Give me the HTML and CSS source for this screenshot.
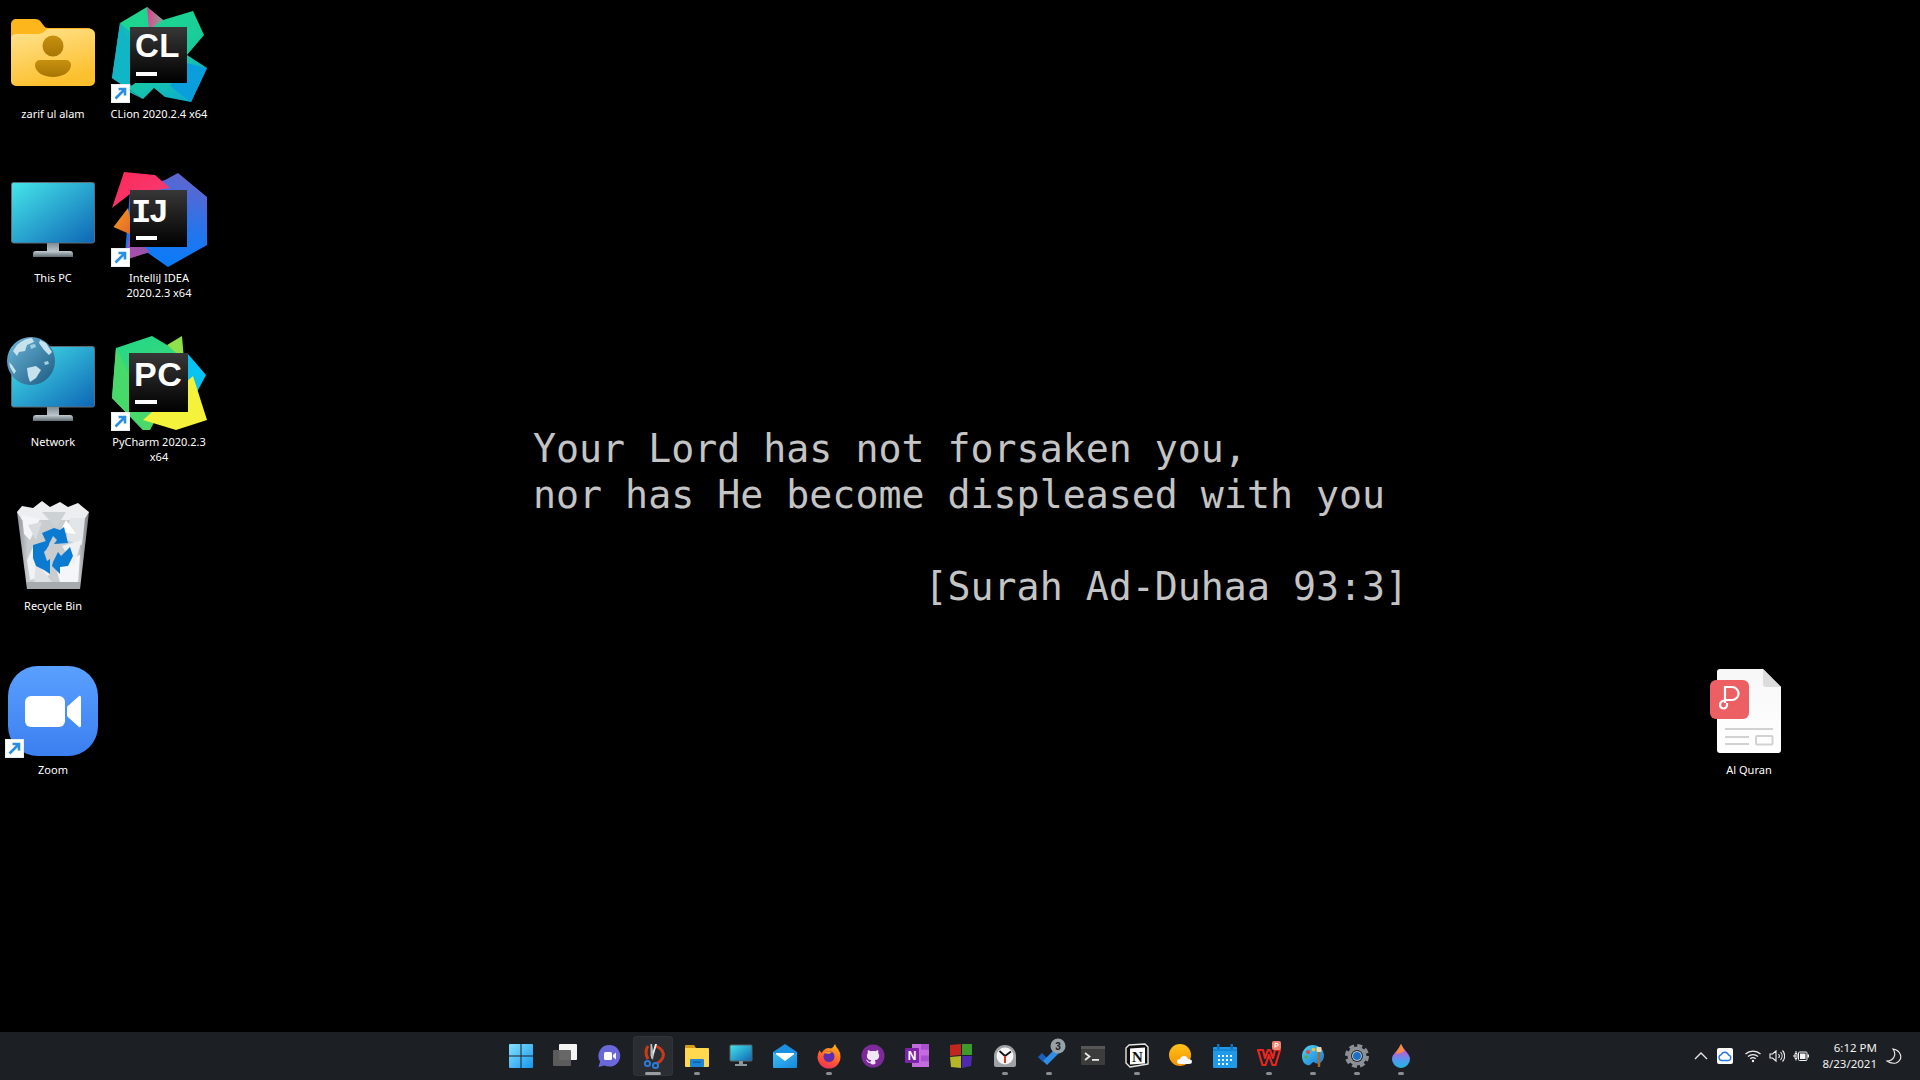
FILE: index.html
```html
<!DOCTYPE html>
<html lang="en">
<head>
<meta charset="utf-8">
<title>Desktop</title>
<link rel="stylesheet" href="styles.css">
</head>
<body>
<svg class="defs" aria-hidden="true">
  <defs>
    <linearGradient id="screen" x1="0" y1="0" x2="1" y2="1"><stop offset="0" stop-color="#45e6ea"/><stop offset="1" stop-color="#0e65b5"/></linearGradient>
    <linearGradient id="base" x1="0" y1="0" x2="0" y2="1"><stop offset="0" stop-color="#c3cdd3"/><stop offset="1" stop-color="#5f6a72"/></linearGradient>
    <linearGradient id="neck" x1="0" y1="0" x2="0" y2="1"><stop offset="0" stop-color="#7f8b93"/><stop offset="1" stop-color="#b9c3c9"/></linearGradient>
    <linearGradient id="jb" x1="0" y1="0" x2="0" y2="1"><stop offset="0" stop-color="#373737"/><stop offset="1" stop-color="#000"/></linearGradient>
    <linearGradient id="folder" x1="0" y1="0" x2="0.4" y2="1"><stop offset="0" stop-color="#ffe391"/><stop offset="1" stop-color="#fcc02e"/></linearGradient>
    <linearGradient id="person" x1="0" y1="0" x2="0" y2="1"><stop offset="0" stop-color="#c7900f"/><stop offset="1" stop-color="#a87604"/></linearGradient>
    <linearGradient id="clGreen" x1="0" y1="0" x2="1" y2="1"><stop offset="0" stop-color="#1fd98a"/><stop offset="1" stop-color="#17c9a0"/></linearGradient>
    <linearGradient id="clBlue" x1="0" y1="1" x2="1" y2="0"><stop offset="0" stop-color="#009ae5"/><stop offset="0.55" stop-color="#1cc7a8"/><stop offset="1" stop-color="#009ae5"/></linearGradient>
    <linearGradient id="clLow" x1="0" y1="0" x2="1" y2="1"><stop offset="0" stop-color="#1fd98a"/><stop offset="1" stop-color="#0aa7d8"/></linearGradient>
    <linearGradient id="clPink" x1="0" y1="0" x2="1" y2="0.3"><stop offset="0" stop-color="#ed358c"/><stop offset="1" stop-color="#8f9a94"/></linearGradient>
    <linearGradient id="ijBlue" x1="0.3" y1="1" x2="0.6" y2="0"><stop offset="0" stop-color="#087cfa"/><stop offset="0.45" stop-color="#1f76ee"/><stop offset="1" stop-color="#5f66cf"/></linearGradient>
    <linearGradient id="ijPink" x1="0" y1="0" x2="1" y2="1"><stop offset="0" stop-color="#fe2857"/><stop offset="1" stop-color="#f2407a"/></linearGradient>
    <linearGradient id="ijOrange" x1="0" y1="0" x2="1" y2="1"><stop offset="0" stop-color="#fc9b1f"/><stop offset="1" stop-color="#d8632c"/></linearGradient>
    <linearGradient id="ijPurple" x1="0" y1="1" x2="1" y2="0"><stop offset="0" stop-color="#b94bb0"/><stop offset="1" stop-color="#7c59a4"/></linearGradient>
    <linearGradient id="pcGreen" x1="0" y1="0" x2="0.3" y2="1"><stop offset="0" stop-color="#21d789"/><stop offset="1" stop-color="#4fd86a"/></linearGradient>
    <linearGradient id="zoomBg" x1="0" y1="0" x2="0" y2="1"><stop offset="0" stop-color="#5aa0ff"/><stop offset="1" stop-color="#3b7ff0"/></linearGradient>
    <linearGradient id="globe" x1="0" y1="0" x2="1" y2="1"><stop offset="0" stop-color="#6db8dc"/><stop offset="1" stop-color="#1c5a80"/></linearGradient>
    <linearGradient id="binBody" x1="0" y1="0" x2="1" y2="0"><stop offset="0" stop-color="#8d9296"/><stop offset="0.15" stop-color="#c9cdd0"/><stop offset="0.85" stop-color="#c9cdd0"/><stop offset="1" stop-color="#74787c"/></linearGradient>
    <linearGradient id="doc" x1="0" y1="0" x2="0" y2="1"><stop offset="0" stop-color="#f7f7f7"/><stop offset="1" stop-color="#fff"/></linearGradient>
    <linearGradient id="win" x1="0" y1="0" x2="1" y2="1"><stop offset="0" stop-color="#86e2ff"/><stop offset="1" stop-color="#1596ee"/></linearGradient>
    <linearGradient id="fxOuter" x1="0.7" y1="0" x2="0.3" y2="1"><stop offset="0" stop-color="#ffb415"/><stop offset="0.6" stop-color="#ff5a30"/><stop offset="1" stop-color="#f0305a"/></linearGradient>
    <linearGradient id="drop" x1="0" y1="0" x2="0" y2="1"><stop offset="0" stop-color="#f0589e"/><stop offset="0.35" stop-color="#b165d8"/><stop offset="0.7" stop-color="#4a9cf0"/><stop offset="1" stop-color="#25b6dc"/></linearGradient>
    <linearGradient id="sun" x1="0" y1="0" x2="0" y2="1"><stop offset="0" stop-color="#ffc21a"/><stop offset="1" stop-color="#f59300"/></linearGradient>
    <linearGradient id="mail" x1="0" y1="0" x2="1" y2="1"><stop offset="0" stop-color="#3fc0f5"/><stop offset="1" stop-color="#1488dc"/></linearGradient>
    <linearGradient id="palette" x1="0" y1="0" x2="1" y2="1"><stop offset="0" stop-color="#52d4f2"/><stop offset="1" stop-color="#1876d8"/></linearGradient>
    <symbol id="shortcut" viewBox="0 0 19 19">
      <rect width="19" height="19" fill="#e9eef2"/>
      <rect x="1" y="1" width="17" height="17" fill="#fff"/>
      <path d="M4.5 14.5L13.5 5.5M7.5 5H14V11.5" fill="none" stroke="#2a8fe3" stroke-width="2.6"/>
    </symbol>
  </defs>
</svg>

<main class="desktop">
  <pre class="verse">Your Lord has not forsaken you,
nor has He become displeased with you

                 [Surah Ad-Duhaa 93:3]</pre>

  <div class="icon-grid">
    <figure class="item r1 c1">
      <svg class="art" viewBox="0 0 106 106">
        <path d="M11 24a5 5 0 0 1 5-5h19q4 0 6 3l3 4q1 2 4 2h40a5 5 0 0 1 5 5v10H11z" fill="#fdb61c"/>
        <path d="M11 39q0-4 4-5h22q5 0 8-3l2-2h43a5 5 0 0 1 5 5v47a5 5 0 0 1-5 5H16a5 5 0 0 1-5-5z" fill="url(#folder)"/>
        <circle cx="53" cy="46" r="10.5" fill="url(#person)"/>
        <path d="M40 60h26a5 5 0 0 1 5 5c0 7-8 12-18 12s-18-5-18-12a5 5 0 0 1 5-5z" fill="url(#person)"/>
      </svg>
      <figcaption>zarif ul alam</figcaption>
    </figure>

    <figure class="item r1 c2">
      <svg class="art" viewBox="106 0 106 106">
        <polygon points="120,23 147,7 163,20 193,11 204,35 187,55 175,60 130,40" fill="url(#clGreen)"/>
        <polygon points="147,7 163,20 149,30" fill="url(#clPink)"/>
        <polygon points="120,23 140,40 125,90 143,99 112,78" fill="url(#clBlue)"/>
        <polygon points="112,78 120,23 135,50 130,84 143,99" fill="#10b6c6"/>
        <polygon points="187,55 207,68 191,102 165,97 154,88 143,99 128,88 170,60" fill="url(#clLow)"/>
        <polygon points="187,63 207,68 191,102 170,86" fill="#0a9fdc"/>
        <rect x="130" y="27" width="57" height="56" fill="url(#jb)"/>
        <text class="jb-text wide" x="135" y="57" font-size="33">CL</text>
        <rect x="136" y="72" width="21" height="4" fill="#fff"/>
        <use href="#shortcut" x="111" y="84" width="19" height="19"/>
      </svg>
      <figcaption>CLion 2020.2.4 x64</figcaption>
    </figure>

    <figure class="item r2 c1">
      <svg class="art" viewBox="0 164 106 106">
        <rect x="11.5" y="182.5" width="83" height="60.500" rx="2" fill="url(#screen)" stroke="#5f6a72"/>
        <rect x="47" y="243" width="12" height="8" fill="url(#neck)"/>
        <path d="M33 254q0-3 3-3h34q3 0 3 3v3H33z" fill="url(#base)"/>
      </svg>
      <figcaption>This PC</figcaption>
    </figure>

    <figure class="item r2 c2">
      <svg class="art" viewBox="106 164 106 106">
        <polygon points="178,173 207,197 207,245 168,267 148,253 125,255 130,190 165,180" fill="url(#ijBlue)"/>
        <polygon points="124,172 155,175 170,188 130,194 112,208" fill="url(#ijPink)"/>
        <polygon points="128,208 134,236 113.500,227" fill="url(#ijOrange)"/>
        <polygon points="130,232 150,252 125,260" fill="url(#ijPurple)"/>
        <rect x="130" y="190" width="57" height="57" fill="url(#jb)"/>
        <text class="jb-mono" x="131" y="222" font-size="34">IJ</text>
        <rect x="136" y="236" width="21" height="4" fill="#fff"/>
        <use href="#shortcut" x="111" y="248" width="19" height="19"/>
      </svg>
      <figcaption>IntelliJ IDEA 2020.2.3 x64</figcaption>
    </figure>

    <figure class="item r3 c1">
      <svg class="art" viewBox="0 328 106 106">
        <rect x="11.5" y="346.500" width="83" height="60.500" rx="2" fill="url(#screen)" stroke="#5f6a72"/>
        <rect x="47" y="407" width="12" height="8" fill="url(#neck)"/>
        <path d="M33 418q0-3 3-3h34q3 0 3 3v3H33z" fill="url(#base)"/>
        <circle cx="31" cy="361" r="24" fill="url(#globe)"/>
        <path d="M17 345q8-7 15-7l2 4-7 3-2 6-6 1-2 4-4-5zM27 368l9-2 5 4-5 8-6 4-2-6zM40 340l6 3 6 9-3 3-5-5-5-7zM9 362l3 3 4 6-2 3-4-7z" fill="#c6e2ec"/>
        <path d="M30 345l5-1 1 3-5 2zM44 362l4-1 1 3-4 1z" fill="#9fcfe2"/>
      </svg>
      <figcaption>Network</figcaption>
    </figure>

    <figure class="item r3 c2">
      <svg class="art" viewBox="106 328 106 106">
        <polygon points="188,354 206,375 197,392 185,380" fill="#07c3f2"/>
        <polygon points="116,348 152,336 167,345 188,360 150,430 143,430 112,398" fill="url(#pcGreen)"/>
        <polygon points="167,345 182,336 184,360" fill="#8fe04a"/>
        <polygon points="112,398 116,348 135,385 143,430" fill="#47d96a"/>
        <polygon points="143,420 193,376 207,420 176,430" fill="#f5f23c"/>
        <rect x="129" y="353" width="59" height="59" fill="url(#jb)"/>
        <text class="jb-text wide" x="134" y="386" font-size="34">PC</text>
        <rect x="135" y="400" width="22" height="4" fill="#fff"/>
        <use href="#shortcut" x="111" y="412" width="19" height="19"/>
      </svg>
      <figcaption>PyCharm 2020.2.3 x64</figcaption>
    </figure>

    <figure class="item r4 c1">
      <svg class="art" viewBox="0 492 106 106">
        <polygon points="17,512 89,512 80,589 27,589" fill="url(#binBody)"/>
        <polygon points="17,512 22,506 33,508 42,501 50,507 60,502 68,507 78,503 84,508 89,512 84,520 22,520" fill="#eceef0"/>
        <polygon points="22,515 40,519 30,540 24,534" fill="#f4f5f6"/>
        <polygon points="70,518 85,518 82,545 66,540" fill="#e3e6e8"/>
        <polygon points="34,545 50,575 30,580 27,560" fill="#f0f2f3"/>
        <polygon points="55,565 80,555 78,582 60,582" fill="#f5f6f7"/>
        <polygon points="42,512 66,512 56,528" fill="#cdd2d5"/>
        <polygon points="28,525 42,522 36,540" fill="#d9dcdf"/>
        <polygon points="66,520 76,534 60,532" fill="#fff"/>
        <polygon points="36,562 52,582 34,584" fill="#dfe2e4"/>
        <polygon points="62,546 82,540 74,566" fill="#eef0f1"/>
        <rect x="27" y="582" width="53" height="7" fill="#a6abae"/>
        <polygon points="42,533 54,528 60,530 64,527 68,543 54,544 57,540 53,536 48,546" fill="#0b7ad1"/>
        <polygon points="33,545 46,541 49,545 46,550 44,552 47,561 50,559 50,574 44,570 36,566 33,558" fill="#0b7ad1"/>
        <polygon points="53,562 58,552 61,556 70,547 73,556 68,566 60,567 60,574 52,566" fill="#0b7ad1"/>
      </svg>
      <figcaption>Recycle Bin</figcaption>
    </figure>

    <figure class="item r5 c1">
      <svg class="art" viewBox="0 656 106 106">
        <rect x="8" y="666" width="90" height="90" rx="30" fill="url(#zoomBg)"/>
        <rect x="25" y="696" width="40" height="31" rx="6" fill="#fff"/>
        <path d="M67 708q0-2 2-3l10-9q2-1 2 2v27q0 3-2 2l-10-9q-2-1-2-3z" fill="#fff"/>
        <use href="#shortcut" x="5" y="739" width="19" height="19"/>
      </svg>
      <figcaption>Zoom</figcaption>
    </figure>

    <figure class="item r5 c17">
      <svg class="art" viewBox="1696 656 106 106">
        <path d="M1720 669h43l18 18v63a3 3 0 0 1-3 3h-58a3 3 0 0 1-3-3v-78a3 3 0 0 1 3-3z" fill="url(#doc)"/>
        <path d="M1763 669l18 18h-15a3 3 0 0 1-3-3z" fill="#dcdcdc"/>
        <rect x="1710" y="680" width="39" height="39" rx="6" fill="#ec6063"/>
        <path d="M1725 703v-16h7a6.500 6.500 0 0 1 0 13h-4q-8 0-8 5a3.500 3.500 0 0 0 7 0v-2" fill="none" stroke="#fff" stroke-width="2.200"/>
        <path d="M1725 729h48M1725 737h24M1725 744h24" stroke="#d2d2d2" stroke-width="2"/>
        <rect x="1756" y="736" width="16.500" height="8.500" rx="1" fill="none" stroke="#d2d2d2" stroke-width="2"/>
      </svg>
      <figcaption>Al Quran</figcaption>
    </figure>
  </div>
</main>

<footer class="taskbar">
  <div></div>
  <nav class="apps">
    <div class="app"><svg class="tb" viewBox="0 0 24 24"><path d="M0 1a1 1 0 0 1 1-1h10.500v11.500H0zM12.500 0H23a1 1 0 0 1 1 1v10.500H12.500zM0 12.500h11.500V24H1a1 1 0 0 1-1-1zM12.500 12.500H24V23a1 1 0 0 1-1 1H12.500z" fill="url(#win)"/></svg></div>
    <div class="app"><svg class="tb" viewBox="0 0 24 24"><rect x="6" y="0" width="18" height="16" rx="1" fill="#f4f4f4"/><rect x="0" y="6" width="18" height="16" rx="1" fill="#5f5f5f" opacity=".95"/></svg></div>
    <div class="app"><svg class="tb" viewBox="0 0 24 24"><path d="M12.500 1a10.800 10.800 0 1 1-5 20.400L1.500 23l1.600-5.400A10.800 10.800 0 0 1 12.500 1z" fill="#6a67d8"/><rect x="7" y="8" width="8" height="8" rx="1.500" fill="#fff"/><path d="M16 11l3-2.500v7L16 13z" fill="#fff"/></svg></div>
    <div class="app active"><svg class="tb" viewBox="0 0 24 24"><path d="M7 2Q3 8 7 15M15 2Q24 6 22 13Q20 18 16 19" fill="none" stroke="#c93a17" stroke-width="3"/><path d="M16 0l-4.500 15-1.500-1L14 0z" fill="#f0f0f0"/><path d="M9.500 0v12l2.500 4 .5-5L11 0z" fill="#bdbdbd"/><circle cx="6.500" cy="19.500" r="2.600" fill="none" stroke="#2a7bd8" stroke-width="2"/><circle cx="14.500" cy="21.500" r="2.600" fill="none" stroke="#2a7bd8" stroke-width="2"/></svg></div>
    <div class="app on"><svg class="tb" viewBox="0 0 24 24"><path d="M0 2a1 1 0 0 1 1-1h8l2 3h12v6H0z" fill="#d99a16"/><rect x="0" y="4" width="24" height="19" rx="1" fill="#ffd84f"/><rect x="5" y="15" width="14" height="8" rx="1" fill="#1d85d6"/><rect x="8" y="17.500" width="8" height="1.500" fill="#0f5ea8"/></svg></div>
    <div class="app"><svg class="tb" viewBox="0 0 24 24"><rect x="1" y="1" width="22" height="16" rx="1" fill="url(#screen)" stroke="#59646b" stroke-width="1"/><rect x="10" y="17" width="4" height="3" fill="#8b969d"/><rect x="6" y="20" width="12" height="2" fill="#8b969d"/></svg></div>
    <div class="app"><svg class="tb" viewBox="0 0 24 24"><path d="M0 8L12 0l12 8v15H0z" fill="#1b8fe0"/><path d="M3 9h18v8H3z" fill="#fff"/><path d="M0 8l12 9 12-9v15a1 1 0 0 1-1 1H1a1 1 0 0 1-1-1z" fill="url(#mail)"/></svg></div>
    <div class="app on"><svg class="tb" viewBox="0 0 24 24"><path d="M18 0q1 3 3 5 3 4 2.500 8A11.500 11.500 0 0 1 .5 13Q.5 9 3 6q0 2 1.500 3Q6 6 9 4.500q3-1 5 0 3-1.500 4-4.500z" fill="url(#fxOuter)"/><circle cx="12" cy="12.500" r="5.500" fill="#5f2cb0"/><path d="M6 9q4-3 9-1l-3 2z" fill="#ff9a1f"/></svg></div>
    <div class="app"><svg class="tb" viewBox="0 0 24 24"><circle cx="12" cy="12" r="11.500" fill="#7c2b98"/><circle cx="12" cy="12" r="8.500" fill="#f1e6f5"/><path transform="translate(2.400 2.400) scale(1.200)" fill="#7c2b98" d="M8 0C3.580 0 0 3.580 0 8c0 3.540 2.290 6.530 5.470 7.590.4.070.55-.17.55-.38 0-.19-.01-.82-.01-1.490-2.010.37-2.530-.49-2.690-.94-.09-.23-.48-.94-.82-1.130-.28-.15-.68-.52-.01-.53.630-.01 1.080.58 1.230.82.720 1.210 1.870.87 2.330.66.070-.52.280-.87.510-1.070-1.780-.2-3.640-.89-3.640-3.950 0-.87.310-1.590.820-2.150-.08-.2-.36-1.020.080-2.120 0 0 .67-.21 2.200.82.640-.18 1.320-.27 2-.27.680 0 1.360.09 2 .27 1.530-1.040 2.200-.82 2.200-.82.440 1.100.160 1.920.080 2.120.510.56.820 1.270.820 2.150 0 3.070-1.870 3.750-3.650 3.950.29.25.54.73.54 1.480 0 1.070-.01 1.930-.01 2.200 0 .21.15.46.55.38A8.013 8.013 0 0 0 16 8c0-4.420-3.580-8-8-8z"/></svg></div>
    <div class="app"><svg class="tb" viewBox="0 0 24 24"><rect x="7" y="0" width="17" height="23" fill="#c46be0"/><path d="M16 0h8v5.750h-8zM16 11.500h8v5.750h-8z" fill="#a94fd0"/><rect x="0" y="4" width="14" height="15" rx="1" fill="#7e22a8"/><text class="onenote" x="7" y="16" text-anchor="middle">N</text></svg></div>
    <div class="app"><svg class="tb" viewBox="0 0 24 24"><polygon points="1,1 12,0 12,11 1,12" fill="#c3261c"/><polygon points="13,0 23,0 23,11 13,11" fill="#3f9a2c"/><polygon points="1,13 12,12 12,24 2,23" fill="#b6b52a"/><polygon points="13,12 23,12 22,22 13,24" fill="#4d2ab0"/></svg></div>
    <div class="app on"><svg class="tb" viewBox="0 0 24 24"><path d="M1 12a11 11 0 0 1 22 0v9a2 2 0 0 1-2 2H3a2 2 0 0 1-2-2z" fill="#9ea3a6"/><circle cx="12" cy="12" r="8.500" fill="#f6f6f6"/><path d="M12 12L6.500 7M12 12l6-4.500" stroke="#111" stroke-width="1.700"/><path d="M12 12v7" stroke="#d43a20" stroke-width="2"/></svg></div>
    <div class="app on"><svg class="tb" viewBox="0 0 24 24"><path d="M1 13l4-4 5 5-4 4z" fill="#1a5fbe"/><path d="M6 18l13-13 4 4-13 13z" fill="#2f8de8" transform="translate(0 -1)"/><circle cx="21" cy="2" r="7.500" fill="#98a1a5"/><text class="count" x="21" y="5.500" text-anchor="middle">3</text></svg></div>
    <div class="app"><svg class="tb" viewBox="0 0 24 24"><rect x="0" y="2" width="24" height="19" rx="1" fill="#3c3c3c"/><rect x="0" y="2" width="24" height="3" fill="#565656"/><path d="M4 9l4.500 3.500L4 16" fill="none" stroke="#e8e8e8" stroke-width="1.800"/><rect x="11" y="15" width="7" height="1.800" fill="#e8e8e8"/></svg></div>
    <div class="app on"><svg class="tb" viewBox="0 0 24 24"><path d="M4 1l16-1 3 3v17l-18 3-4-4V4z" fill="#111" stroke="#e6e6e6" stroke-width="1.400" stroke-linejoin="round"/><path d="M5 4.500l15-1v16l-15 1z" fill="#fff"/><text class="notion" x="12.500" y="17.500" text-anchor="middle">N</text></svg></div>
    <div class="app"><svg class="tb" viewBox="0 0 24 24"><circle cx="11" cy="11" r="11" fill="url(#sun)"/><path d="M11 20q-3 0-3-2.500t3-2.500q1-3 4-3t4 3q4 0 4 2.500t-3 2.500z" fill="#f6f8fa"/></svg></div>
    <div class="app"><svg class="tb" viewBox="0 0 24 24"><path d="M1 3h22a1 1 0 0 1 1 1v19a1 1 0 0 1-1 1H1a1 1 0 0 1-1-1V4a1 1 0 0 1 1-1z" fill="#1f9ae8"/><rect x="4" y="0" width="2.500" height="5" fill="#0f70c0"/><rect x="17.500" y="0" width="2.500" height="5" fill="#0f70c0"/><path d="M0 6h24" stroke="#0f70c0" stroke-width="1"/><path d="M5 11h2v2H5zM9 11h2v2H9zM13 11h2v2h-2zM17 11h2v2h-2zM5 15h2v2H5zM9 15h2v2H9zM13 15h2v2h-2zM17 15h2v2h-2zM5 19h2v2H5zM9 19h2v2H9zM13 19h2v2h-2z" fill="#e9f5fd"/></svg></div>
    <div class="app on"><svg class="tb" viewBox="0 0 24 24"><path d="M1 6l4.500 15h3L12 11l3.500 10h3L23 6h-5l-2 8-3-8h-2l-3 8-2-8z" fill="none" stroke="#e8261f" stroke-width="2.200" stroke-linejoin="round"/><rect x="15" y="-3" width="9" height="9" rx="2" fill="#f08470"/><path d="M18 3.500v-4h2a1 1 0 0 1 0 2.500h-2" fill="none" stroke="#fff"/></svg></div>
    <div class="app on"><svg class="tb" viewBox="0 0 24 24"><path d="M12 1a11 11 0 0 1 11 10q0 6-5 9l-4-1q-1-2-3 0-2 3-5 2-5-2-5-9A11 11 0 0 1 12 1z" fill="url(#palette)"/><circle cx="7" cy="8" r="2" fill="#e8442e"/><circle cx="12.500" cy="5.500" r="1.800" fill="#f4c22b"/><circle cx="5" cy="13" r="1.800" fill="#4cb050"/><path d="M18 7v16" stroke="#a86a2a" stroke-width="2.400"/><rect x="15.500" y="3" width="5" height="5" rx="1" fill="#f2d9a6"/></svg></div>
    <div class="app on"><svg class="tb" viewBox="0 0 24 24"><circle cx="12" cy="12" r="9.500" fill="#8b9196"/><circle cx="12" cy="12" r="10.500" fill="none" stroke="#8b9196" stroke-width="3" stroke-dasharray="5 3.250"/><circle cx="12" cy="12" r="6" fill="#24282c"/><circle cx="12" cy="12" r="4.800" fill="#e8eef2"/><circle cx="12" cy="12" r="4" fill="#1c6fc4"/></svg></div>
    <div class="app on"><svg class="tb" viewBox="0 0 24 24"><path d="M12 0q2 4 5.500 8T21 15a9 9 0 0 1-18 0q0-3.500 3.500-7T12 0z" fill="url(#drop)"/><path d="M12 0q2 4 3.500 7-4 3-9 3Q9 6 12 0z" fill="#f78a3c"/></svg></div>
  </nav>
  <aside class="tray">
    <svg class="tray-ico" viewBox="0 0 16 16"><path d="M2 11l6-6 6 6" fill="none" stroke="#e8e8e8" stroke-width="1.300"/></svg>
    <svg class="tray-ico cloud" viewBox="0 0 16 16"><rect width="16" height="16" rx="2" fill="#fff"/><path d="M5 12.500a3 3 0 0 1-.7-5.900 3.800 3.800 0 0 1 7.200.4 2.800 2.800 0 0 1 0 5.500z" fill="none" stroke="#2a76e8" stroke-width="1.400"/></svg>
    <svg class="tray-ico" viewBox="0 0 16 16"><path d="M.5 6a11 11 0 0 1 15 0M3 8.500a7.500 7.500 0 0 1 10 0M5.300 10.800a4 4 0 0 1 5.400 0" fill="none" stroke="#f0f0f0" stroke-width="1.200"/><circle cx="8" cy="13" r="1.200" fill="#f0f0f0"/></svg>
    <svg class="tray-ico" viewBox="0 0 16 16"><path d="M1 6h2.500L7 3v10l-3.500-3H1zM9.500 6a3 3 0 0 1 0 4M11.500 4a6 6 0 0 1 0 8M13.500 2.500a8 8 0 0 1 0 11" fill="none" stroke="#f0f0f0" stroke-width="1.100"/></svg>
    <svg class="tray-ico" viewBox="0 0 16 16"><rect x="5.500" y="4" width="8.500" height="8.500" rx="1" fill="none" stroke="#f4f4f4"/><rect x="7" y="5.500" width="5.500" height="5.500" fill="#f4f4f4"/><rect x="14.500" y="6.500" width="1.500" height="3" fill="#f4f4f4"/><path d="M0 8h3M2 5.500h2v5H2zM3 6v-3M3 10v2.500" stroke="#f4f4f4" fill="none"/></svg>
    <div class="clock"><div>6:12 PM</div><div>8/23/2021</div></div>
    <svg class="tray-ico moon" viewBox="0 0 16 16"><path d="M7 1q6 1 7.500 6T10 15q-5 1-9-2 5 0 7-4T7 1z" fill="none" stroke="#f0f0f0" stroke-width="1.100"/></svg>
  </aside>
</footer>
</body>
</html>
```
FILE: styles.css
```css
* { box-sizing: border-box; }
html, body { margin: 0; padding: 0; height: 100%; }
body {
  width: 1920px;
  height: 1080px;
  overflow: hidden;
  background: #000;
  display: flex;
  flex-direction: column;
  font-family: "Noto Sans", "Open Sans", sans-serif;
}
.defs { position: absolute; width: 0; height: 0; }

.desktop { position: relative; flex: 1; min-height: 0; }

.verse {
  position: absolute;
  left: 533px;
  top: 426px;
  margin: 0;
  font-family: "DejaVu Sans Mono", "Liberation Mono", monospace;
  font-size: 38.25px;
  line-height: 46px;
  color: #c4c4c4;
}

.icon-grid {
  display: grid;
  grid-template-columns: repeat(18, 106px);
  grid-auto-rows: 164px;
}
.item {
  margin: 0;
  display: flex;
  flex-direction: column;
  align-items: center;
}
.art { width: 106px; height: 106px; display: block; flex: none; }
figcaption {
  width: 102px;
  font-size: 11px;
  line-height: 15px;
  color: #fff;
  text-align: center;
}
.r1 { grid-row: 1; } .r2 { grid-row: 2; } .r3 { grid-row: 3; } .r4 { grid-row: 4; } .r5 { grid-row: 5; }
.c1 { grid-column: 1; } .c2 { grid-column: 2; } .c17 { grid-column: 17; }

.jb-text {
  font-family: "Liberation Sans", sans-serif;
  font-weight: 700;
  fill: #fff;
}
.jb-text.wide { letter-spacing: 0.5px; }
.jb-mono {
  font-family: "Liberation Mono", monospace;
  font-weight: 700;
  letter-spacing: -3px;
  fill: #fff;
}

.taskbar {
  flex: none;
  height: 48px;
  background: #1c2025;
  display: grid;
  grid-template-columns: 1fr auto 1fr;
  align-items: center;
}
.apps { display: flex; padding-left: 1px; }
.app {
  position: relative;
  width: 44px;
  height: 40px;
  display: flex;
  align-items: center;
  justify-content: center;
}
.tb { width: 24px; height: 24px; display: block; overflow: visible; }
.app.on::after, .app.active::after {
  content: "";
  position: absolute;
  left: 50%;
  bottom: 1px;
  width: 6px;
  height: 3px;
  margin-left: -3px;
  border-radius: 2px;
  background: #8b8e91;
}
.app.active::before {
  content: "";
  position: absolute;
  inset: 0 2px;
  background: #2a2e33;
  border-radius: 4px;
  box-shadow: inset 0 0 0 1px #31353a;
}
.app.active .tb { position: relative; }
.app.active::after { width: 16px; margin-left: -8px; background: #9a9ea2; }

.onenote { font: 700 12px "Liberation Sans", sans-serif; fill: #fff; }
.count { font: 700 10px "Liberation Sans", sans-serif; fill: #1c2025; }
.notion { font: 700 15px "Liberation Serif", serif; fill: #111; }

.tray {
  display: flex;
  align-items: center;
  justify-content: flex-end;
  color: #fff;
  padding-right: 18px;
}
.tray-ico { width: 16px; height: 16px; display: block; margin-right: 8px; flex: none; }
.tray-ico.cloud { margin-right: 12px; }
.clock {
  width: 60px;
  margin-right: 9px;
  text-align: right;
  font-size: 11.5px;
  line-height: 16px;
  color: #f2f2f2;
}
.tray-ico.moon { margin-right: 0; }
```
